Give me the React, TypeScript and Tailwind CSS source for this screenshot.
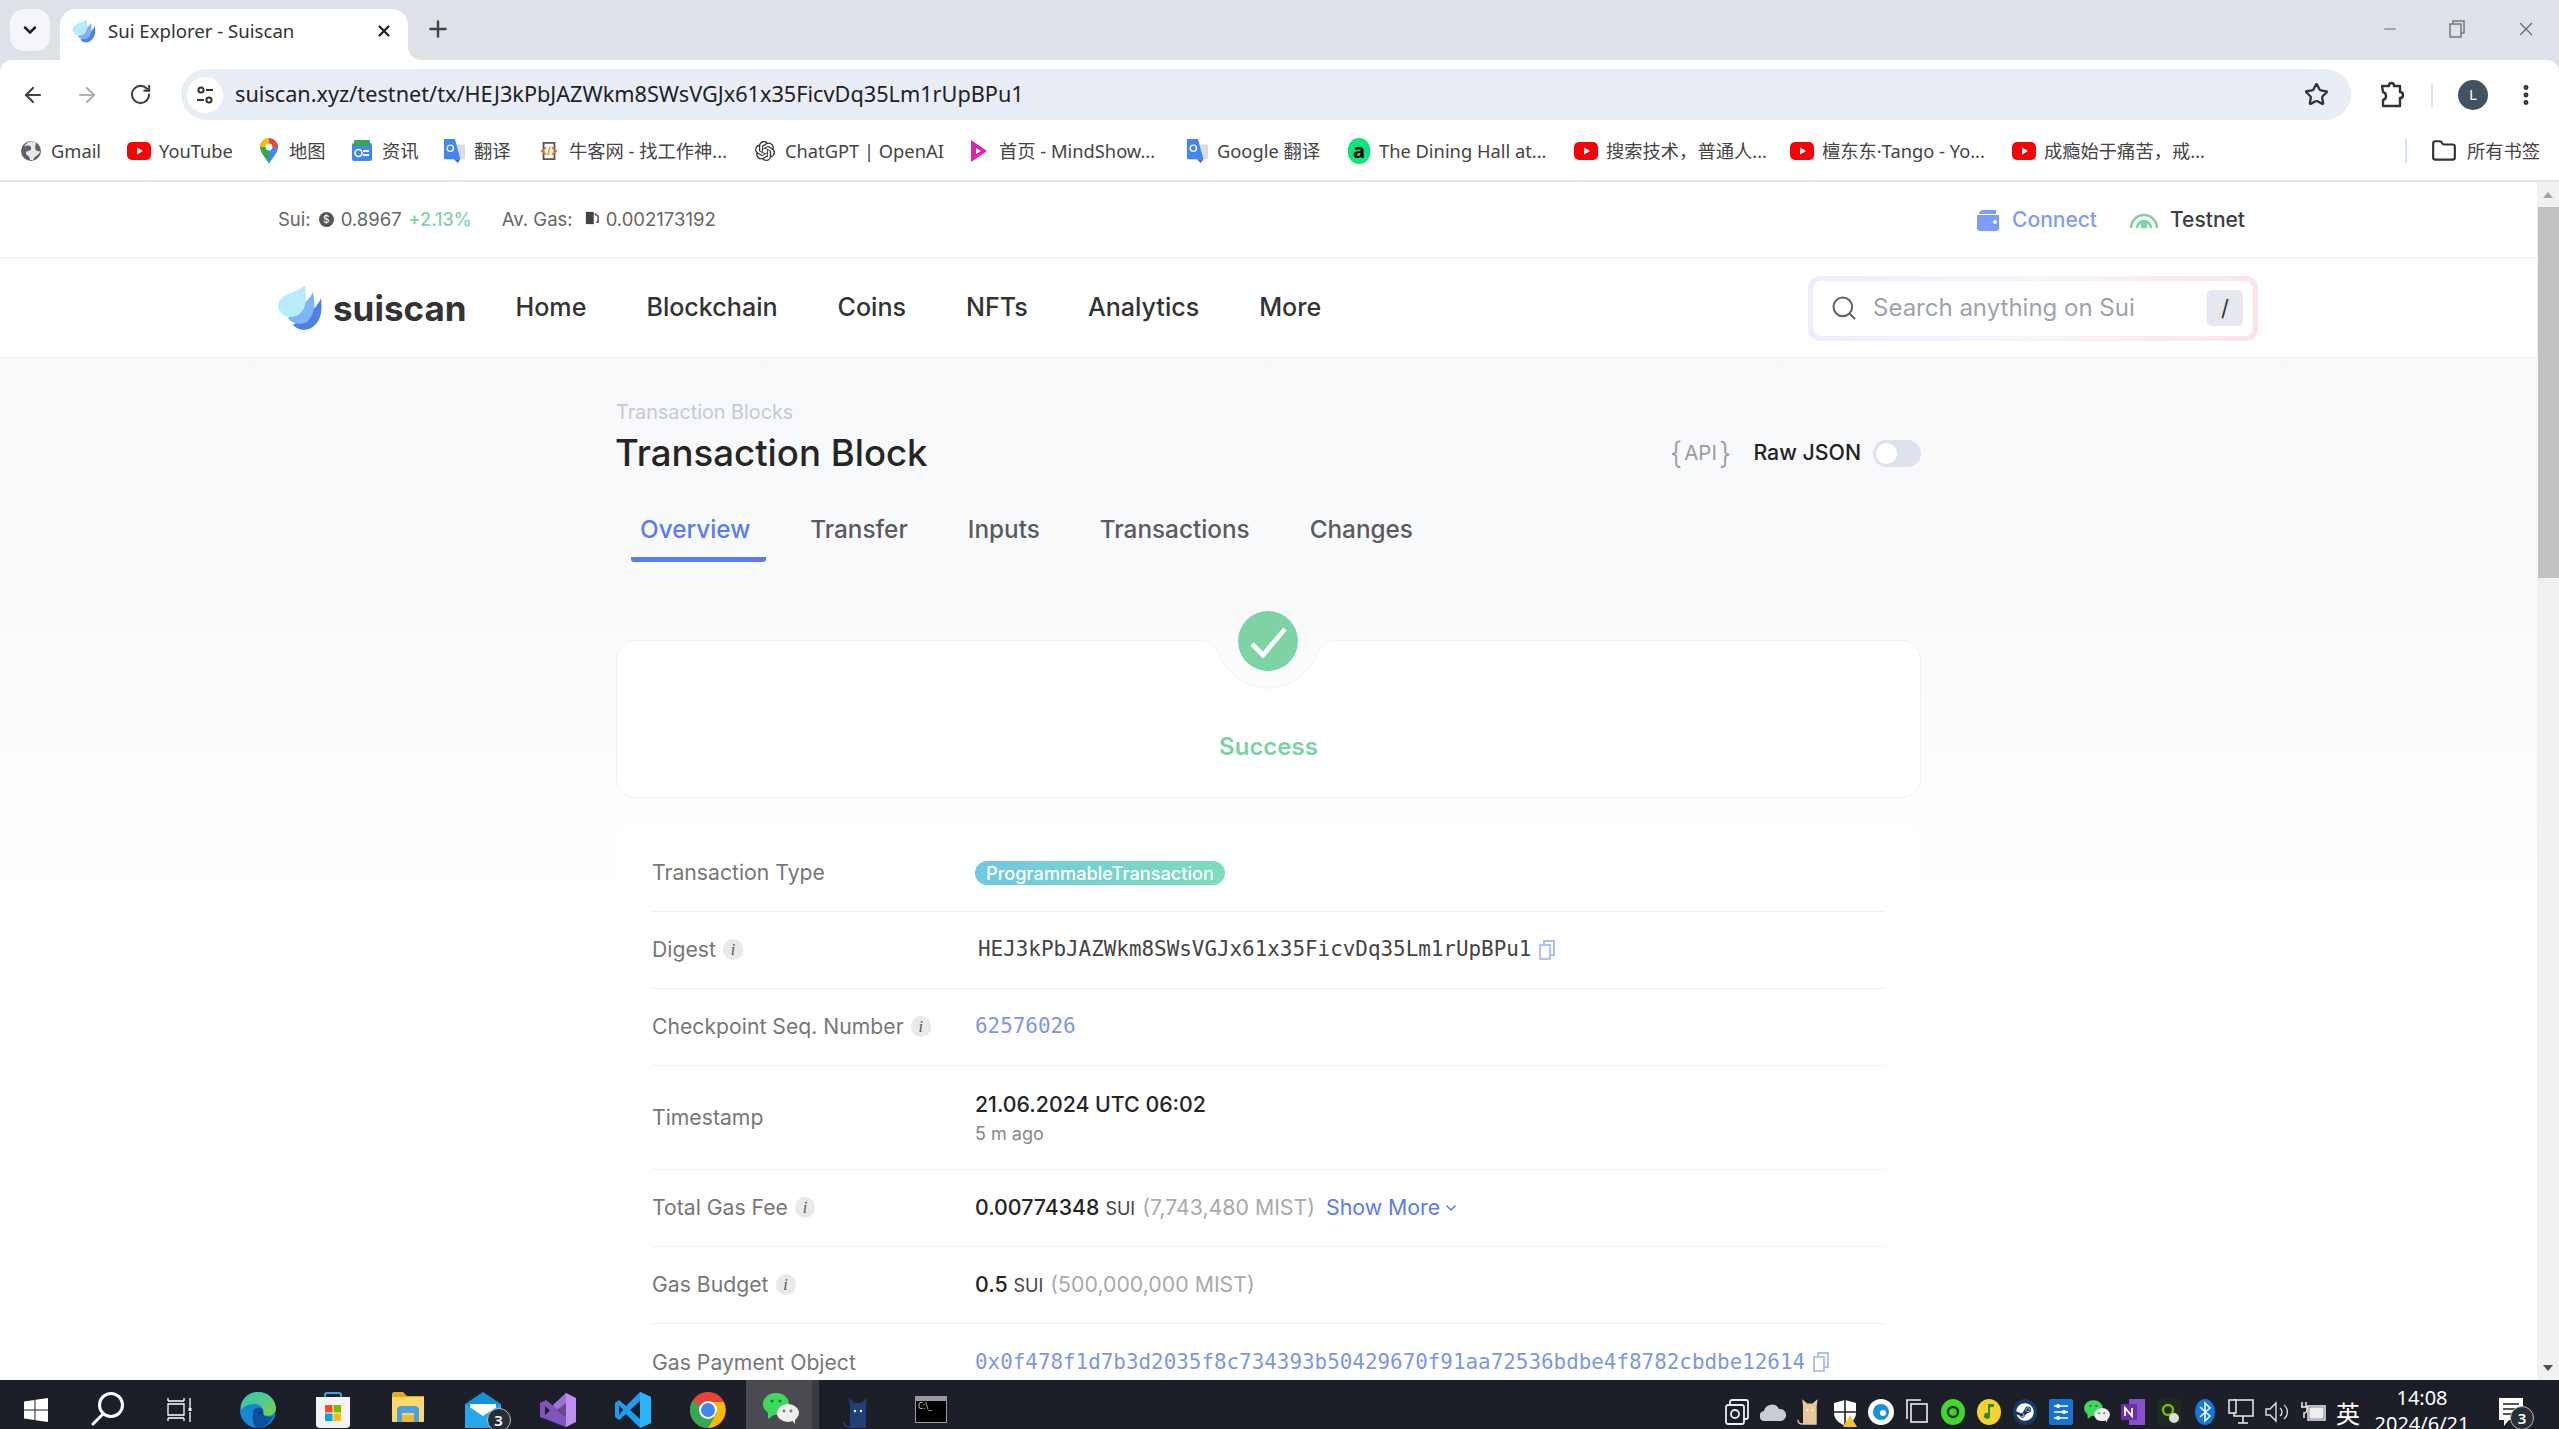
import { ArrowLeft, ArrowRight, ChevronDown, EllipsisVertical, Folder, Minus, Plus, RotateCw, Search, Star, X } from "lucide-react";
import { SiOpenai } from "react-icons/si";
import { FaSteam } from "react-icons/fa";
import type { ReactNode } from "react";

const SuiDrop = ({ className }: { className: string }) => (
  <svg viewBox="0 0 44 46" className={className}>
    <path d="M43 13C44 24 44 33 37 40C30 47 20 46 15 40C20 36 38 26 43 13Z" fill="#4f80e1" />
    <path d="M35 7C37 18 38 27 30 36C24 41 14 39 10 33C16 24 30 19 35 7Z" fill="#7eb4f8" />
    <path d="M27 0C28 8 29 18 25 25C20 33 9 34 3 28C-2 22 0 15 6 11C12 8 22 5 27 0Z" fill="#b7ecfb" />
  </svg>
);

const YoutubeIcon = () => (
  <svg viewBox="0 0 24 24" className="w-6 h-6">
    <rect x="0" y="3" width="24" height="18" rx="5" fill="#f40407" />
    <path d="M10 8.5L16 12L10 15.5Z" fill="#fff" />
  </svg>
);

const TranslateIcon = () => (
  <svg viewBox="0 0 24 26" className="w-[22px] h-6">
    <rect x="8" y="6" width="16" height="16" rx="1" fill="#dadce0" />
    <path d="M1 0H13L19 22H3A2 2 0 0 1 1 20Z" fill="#4285f4" />
    <path d="M12 22L16 26L19 22Z" fill="#3367d6" />
    <circle cx="8" cy="10" r="3.4" fill="none" stroke="#fff" strokeWidth="1.5" />
  </svg>
);

const bookmarks: { width: number; label: string; icon: ReactNode }[] = [
  {
    width: 108,
    label: "Gmail",
    icon: (
      <svg viewBox="0 0 22 22" className="w-[22px] h-[22px]">
        <circle cx="11" cy="11" r="10" fill="#5f6368" />
        <path d="M4 7C8 4 12 6 11 9C10 12 6 10 6 13C6 16 10 15 10 20L13 20C15 15 20 15 20 11C16 12 14 9 16 3C12 0 6 2 4 7Z" fill="#fff" opacity=".85" />
      </svg>
    ),
  },
  { width: 130, label: "YouTube", icon: <YoutubeIcon /> },
  {
    width: 93,
    label: "地图",
    icon: (
      <svg viewBox="0 0 18 26" className="w-[18px] h-[26px]">
        <path d="M9 26C6 20 0 15 0 9A9 9 0 0 1 9 0Z" fill="#34a853" />
        <path d="M9 26C12 20 18 15 18 9H9Z" fill="#4285f4" />
        <path d="M9 0A9 9 0 0 1 18 9H9Z" fill="#ea4335" />
        <path d="M0 9A9 9 0 0 1 9 0V9Z" fill="#fbbc04" />
        <circle cx="9" cy="9" r="3.4" fill="#fff" />
      </svg>
    ),
  },
  {
    width: 92,
    label: "资讯",
    icon: (
      <svg viewBox="0 0 22 22" className="w-[22px] h-[22px]">
        <rect x="1" y="3" width="20" height="18" rx="2" fill="#4285f4" />
        <rect x="3" y="0" width="16" height="6" rx="1" fill="#34a853" />
        <rect x="12" y="10" width="6" height="2" fill="#fff" />
        <rect x="12" y="14" width="6" height="2" fill="#fff" />
        <circle cx="7.5" cy="13" r="3.5" fill="none" stroke="#fff" strokeWidth="1.6" />
      </svg>
    ),
  },
  { width: 95, label: "翻译", icon: <TranslateIcon /> },
  {
    width: 216,
    label: "牛客网 - 找工作神...",
    icon: (
      <svg viewBox="0 0 22 22" className="w-5 h-5" fill="none" strokeWidth="2">
        <path d="M5 2H17V20H5Z" stroke="#555" />
        <path d="M8 7L3 11L8 15" stroke="#e8762b" />
        <path d="M14 7L19 11L14 15" stroke="#e8762b" />
        <path d="M12 6L10 16" stroke="#f2a33a" />
      </svg>
    ),
  },
  { width: 214, label: "ChatGPT | OpenAI", icon: <SiOpenai className="w-5 h-5 text-[#333]" /> },
  {
    width: 218,
    label: "首页 - MindShow...",
    icon: (
      <svg viewBox="0 0 18 24" className="w-[18px] h-6">
        <path d="M1 1L17 12L1 23Z" fill="#e31fb0" />
        <path d="M6 9L11 12L6 15Z" fill="#fff" />
      </svg>
    ),
  },
  { width: 162, label: "Google 翻译", icon: <TranslateIcon /> },
  {
    width: 227,
    label: "The Dining Hall at...",
    icon: (
      <span className="w-[22px] h-[26px] rounded-full bg-[#0fe37b] flex items-center justify-center text-[20px] font-bold leading-none text-black">a</span>
    ),
  },
  { width: 216, label: "搜索技术，普通人...", icon: <YoutubeIcon /> },
  { width: 222, label: "檀东东·Tango - Yo...", icon: <YoutubeIcon /> },
  { width: 216, label: "成瘾始于痛苦，戒...", icon: <YoutubeIcon /> },
];

const BrowserChrome = () => (
  <div className="bg-[#dee1e8] font-['Noto_Sans','Noto_Sans_CJK_SC',sans-serif] text-[#3c4043]">
    <div className="h-[60px] flex items-start pt-[9px]">
      <div className="ml-[10px] w-10 h-[42px] rounded-[14px] bg-[#f5f6f9] flex items-center justify-center">
        <ChevronDown className="w-5 h-5 text-[#222]" strokeWidth={3} />
      </div>
      <div className="relative ml-[10px] w-[348px] h-[51px] bg-white rounded-t-[16px] flex items-center pl-[12px] pr-[15px] pb-[8px]">
        <SuiDrop className="w-6 h-6" />
        <span className="ml-3 text-[18.6px] text-[#333] flex-1 whitespace-nowrap">Sui Explorer - Suiscan</span>
        <X className="w-[18px] h-[18px] text-[#222]" strokeWidth={3} />
        <svg viewBox="0 0 14 14" className="absolute -right-[14px] bottom-0 w-[14px] h-[14px]">
          <path d="M0 0C0 8 6 14 14 14H0Z" fill="#fff" />
        </svg>
      </div>
      <Plus className="ml-[17px] mt-[7px] w-[26px] h-[26px] text-[#444]" strokeWidth={2.2} />
      <div className="flex-1" />
      <div className="flex items-center h-10 text-[#666]">
        <Minus className="w-[18px] h-[18px] mr-[50px]" strokeWidth={1.5} />
        <svg viewBox="0 0 16 18" className="w-4 h-[18px] mr-[50px]" fill="none" stroke="#777" strokeWidth="1.5">
          <path d="M4 4V1H15V13H12" />
          <rect x="1" y="4" width="11" height="13" />
        </svg>
        <X className="w-[22px] h-[22px] mr-[22px]" strokeWidth={1.4} />
      </div>
    </div>
    <div className="h-[60px] pt-[9px] bg-white rounded-t-[12px] flex items-center">
      <ArrowLeft className="ml-[21px] w-6 h-6 text-[#444]" strokeWidth={2.2} />
      <ArrowRight className="ml-[30px] w-6 h-6 text-[#b0b2b5]" strokeWidth={2.2} />
      <RotateCw className="ml-[30px] w-[23px] h-[23px] text-[#444]" strokeWidth={2.2} />
      <div className="ml-[29px] w-[2170px] h-[51px] rounded-full bg-[#e9edf6] flex items-center pl-[6px] pr-[22px]">
        <span className="w-[36px] h-[36px] rounded-full bg-white flex items-center justify-center">
          <svg viewBox="0 0 20 20" className="w-5 h-5" fill="none" stroke="#333" strokeWidth="2">
            <circle cx="6" cy="5" r="2.6" />
            <path d="M11 5H18" />
            <circle cx="14" cy="15" r="2.6" />
            <path d="M2 15H9" />
          </svg>
        </span>
        <span className="ml-[12px] flex-1 text-[21.7px] text-[#202124]">suiscan.xyz/testnet/tx/HEJ3kPbJAZWkm8SWsVGJx61x35FicvDq35Lm1rUpBPu1</span>
        <Star className="w-[25px] h-[25px] text-[#333]" strokeWidth={2.2} />
      </div>
      <svg viewBox="0 0 24 28" className="ml-[29px] w-6 h-7" fill="none" stroke="#333" strokeWidth="2.4" strokeLinejoin="round">
        <path d="M2 5H9C9 1 14 1 14 5H20V11C24 11 24 17 20 17V25H3V19C7 18 7 12 3 11Z" />
      </svg>
      <div className="ml-[27px] w-[2px] h-[24px] bg-[#d3e3fd]" />
      <div className="ml-[25px] w-[30px] h-[30px] rounded-full bg-[#40535f] text-white text-[15px] flex items-center justify-center">L</div>
      <EllipsisVertical className="ml-[25px] w-[26px] h-[26px] text-[#333]" strokeWidth={2.6} />
    </div>
    <div className="h-[60px] pt-[2px] bg-white flex items-center pl-[19px] text-[18.3px] text-[#444]">
      {bookmarks.map((b) => (
        <div key={b.label} className="flex items-center shrink-0 whitespace-nowrap" style={{ width: b.width }}>
          <span className="w-[24px] flex justify-center">{b.icon}</span>
          <span className="ml-[8px]">{b.label}</span>
        </div>
      ))}
      <div className="flex-1" />
      <div className="w-[2px] h-[24px] bg-[#d3e3fd] mr-[24px]" />
      <Folder className="w-[26px] h-[26px] text-[#333]" strokeWidth={2} />
      <span className="ml-[10px] mr-[19px]">所有书签</span>
    </div>
    <div className="h-[2px] bg-[#e3e4e6]" />
  </div>
);

const Info = () => (
  <span className="ml-[7px] w-[20px] h-[21px] rounded-full bg-[#e9e9ea] inline-flex items-center justify-center font-['Liberation_Serif',serif] italic text-[16px] text-[#555] leading-none">i</span>
);

const Copy = () => (
  <svg viewBox="0 0 16 20" className="ml-[8px] w-4 h-5 shrink-0" fill="none" stroke="#aebcf5" strokeWidth="1.8">
    <rect x="1" y="5" width="10" height="14" />
    <path d="M5 5V1H15V15H11" />
  </svg>
);

const Row = ({ label, info, tall, last, children }: { label: string; info?: boolean; tall?: boolean; last?: boolean; children: ReactNode }) => (
  <div className={`flex items-center ${tall ? "h-[104px]" : "h-[77px]"} ${last ? "" : "border-b border-[#f1f2f3]"}`}>
    <div className="w-[323px] flex items-center text-[#777] text-[21.2px] shrink-0">
      {label}
      {info && <Info />}
    </div>
    <div className="flex items-center whitespace-nowrap">{children}</div>
  </div>
);

const monoFont = "font-['DejaVu_Sans_Mono',monospace] text-[20.9px]";

const Suiscan = () => (
  <div className="flex-1 min-w-0 bg-white font-['Inter',sans-serif] overflow-hidden">
    <div className="h-[77px] flex items-center pl-[278px] pr-[292px] border-b-2 border-[#f2f3f5] text-[18.5px] text-[#666]">
      <span>Sui:</span>
      <span className="ml-[8px] w-[15px] h-[15px] rounded-full bg-[#555] text-white text-[10px] flex items-center justify-center">$</span>
      <span className="ml-[7px]">0.8967</span>
      <span className="ml-[7px] text-[18px] text-[#7dd3a3] font-medium">+2.13%</span>
      <span className="ml-[30px]">Av. Gas:</span>
      <svg viewBox="0 0 16 16" className="ml-[12px] mb-[4px] w-[14px] h-[14px]">
        <path d="M1 1H10V15H1Z" fill="#444" />
        <path d="M11 3L15 6V13H13" fill="none" stroke="#444" strokeWidth="1.6" />
      </svg>
      <span className="ml-[7px]">0.002173192</span>
      <div className="flex-1" />
      <svg viewBox="0 0 22 22" className="w-[22px] h-[22px]">
        <path d="M2 5C2 2 4 1 6 1H19V5Z" fill="#7f9bfb" />
        <path d="M0 6H22V19C22 21 21 22 19 22H3C1 22 0 21 0 19Z" fill="#7f9bfb" />
        <circle cx="18" cy="13" r="2" fill="#fff" />
      </svg>
      <span className="ml-[13px] text-[21px] font-medium text-[#7f9bfb]">Connect</span>
      <svg viewBox="0 0 30 24" className="ml-[32px] mb-[3px] w-[30px] h-6" fill="none" stroke="#7dd3a3" strokeWidth="2.6">
        <path d="M2 22A13 13 0 0 1 28 22" />
        <path d="M8 22A7 7 0 0 1 22 22" />
        <circle cx="15" cy="19" r="3.5" fill="#7dd3a3" stroke="none" />
      </svg>
      <span className="ml-[11px] text-[21px] font-medium text-[#3d3d3d]">Testnet</span>
    </div>
    <div className="h-[98px] flex items-center pl-[278px] pr-[279px] text-[25.1px] font-medium text-[#333]">
      <SuiDrop className="w-[44px] h-[46px]" />
      <span className="ml-[11px] text-[35px] font-bold text-[#333] leading-none">suiscan</span>
      <div className="ml-[49px] flex gap-[60px]">
        <span>Home</span>
        <span>Blockchain</span>
        <span>Coins</span>
        <span>NFTs</span>
        <span>Analytics</span>
        <span>More</span>
      </div>
      <div className="flex-1" />
      <div className="w-[450px] h-[65px] rounded-[12px] p-[5px] bg-[linear-gradient(100deg,#eceefb,#f7f4fb_50%,#fbe4e8)]">
        <div className="h-full bg-white rounded-[8px] flex items-center pl-[17px] pr-[10px]">
          <Search className="w-[28px] h-[28px] text-[#666]" strokeWidth={1.8} />
          <span className="ml-[15px] flex-1 text-[24px] text-[#9ca3af] font-normal">Search anything on Sui</span>
          <span className="w-9 h-9 rounded-[5px] bg-[#e5e8ef] flex items-center justify-center text-[22px] text-[#333] font-normal">/</span>
        </div>
      </div>
    </div>
    <div className="h-[1023px] overflow-hidden border-t border-[#f2f3f5] bg-[linear-gradient(180deg,#f7f8fa_0,#f9fafc_260px,#ffffff_560px)] pl-[616px]">
      <div className="w-[1305px] text-[21.3px]">
        <div className="pt-[42px] text-[19.8px] leading-6 text-[#c6c9d1]">Transaction Blocks</div>
        <div className="mt-[7px] h-11 flex items-center">
          <h1 className="-ml-[1px] text-[36.6px] font-medium text-[#252525] flex-1">Transaction Block</h1>
          <span className="text-[#9a9ca3] text-[20.5px] flex items-center font-normal">
            <span className="text-[30px] font-light leading-none">{"{"}</span>
            <span className="mx-[2px]">API</span>
            <span className="text-[30px] font-light leading-none">{"}"}</span>
          </span>
          <span className="ml-[22px] font-medium text-[#222]">Raw JSON</span>
          <div className="ml-[12px] w-[48px] h-[27px] rounded-full bg-[#dfe1ec] p-[3px]">
            <div className="w-[21px] h-[21px] rounded-full bg-white" />
          </div>
        </div>
        <div className="mt-[25px] ml-[15px] flex gap-[35px] text-[24.3px] font-medium text-[#5b5b5f]">
          <span className="pl-[9px] pr-[16px] pt-[14px] pb-[13px] leading-[30px] border-b-[5px] border-[#5b7cf0] rounded-b-[3px] text-[#5b7cf0]">Overview</span>
          <span className="pl-[9px] pr-[16px] pt-[14px] pb-[18px] leading-[30px]">Transfer</span>
          <span className="pl-[9px] pr-[16px] pt-[14px] pb-[18px] leading-[30px]">Inputs</span>
          <span className="pl-[9px] pr-[16px] pt-[14px] pb-[18px] leading-[30px]">Transactions</span>
          <span className="pl-[9px] pr-[16px] pt-[14px] pb-[18px] leading-[30px]">Changes</span>
        </div>
        <div className="relative mt-[78px] h-[158px] rounded-[20px] bg-white border border-[#f1f2f4] flex items-end justify-center pb-[32px]">
          <span className="text-[24px] font-semibold text-[#7dd3a3]">Success</span>
          <svg viewBox="0 0 140 50" className="absolute left-[581px] -top-[1px] w-[140px] h-[50px]">
            <path d="M0 1C14 1 18 6 22 16C29 34 50 48 70 48C90 48 111 34 118 16C122 6 126 1 140 1V0H0Z" fill="#fbfcfd" stroke="none" />
            <path d="M0 1C14 1 18 6 22 16C29 34 50 48 70 48C90 48 111 34 118 16C122 6 126 1 140 1" fill="none" stroke="#f1f2f4" />
          </svg>
          <div className="absolute left-[621px] -top-[30px] w-[60px] h-[60px] rounded-full bg-[#7dd3a3]">
            <svg viewBox="0 0 60 60" className="w-[60px] h-[60px]" fill="none" stroke="#fff" strokeWidth="4.6">
              <path d="M14 33L25 44L47 18" />
            </svg>
          </div>
        </div>
        <div className="mt-[23px] rounded-[20px] bg-white px-[36px] pt-[14px]">
          <Row label="Transaction Type">
            <span className="px-[11px] h-[24px] rounded-full bg-[linear-gradient(90deg,#72c8e2,#7edcb9)] text-white text-[18.2px] leading-[24px] font-medium">ProgrammableTransaction</span>
          </Row>
          <Row label="Digest" info>
            <span className={`${monoFont} ml-[3px] text-[#444]`}>HEJ3kPbJAZWkm8SWsVGJx61x35FicvDq35Lm1rUpBPu1</span>
            <Copy />
          </Row>
          <Row label="Checkpoint Seq. Number" info>
            <span className={`${monoFont} text-[#7c97e8]`}>62576026</span>
          </Row>
          <Row label="Timestamp" tall>
            <div className="flex flex-col">
              <span className="font-medium text-[#252525] leading-[28px]">21.06.2024 UTC 06:02</span>
              <span className="mt-[4px] text-[18px] text-[#888] leading-[24px]">5 m ago</span>
            </div>
          </Row>
          <Row label="Total Gas Fee" info>
            <span className="font-medium text-[#252525]">0.00774348</span>
            <span className="ml-[6px] text-[18px] text-[#444]">SUI</span>
            <span className="ml-[7px] text-[#aaa]">(7,743,480 MIST)</span>
            <span className="ml-[11px] text-[#5b7cf0]">Show More</span>
            <ChevronDown className="ml-[3px] w-4 h-4 text-[#5b7cf0]" strokeWidth={2.4} />
          </Row>
          <Row label="Gas Budget" info>
            <span className="font-medium text-[#252525]">0.5</span>
            <span className="ml-[6px] text-[18px] text-[#444]">SUI</span>
            <span className="ml-[7px] text-[#aaa]">(500,000,000 MIST)</span>
          </Row>
          <Row label="Gas Payment Object" last>
            <span className={`${monoFont} text-[#7c97e8]`}>0x0f478f1d7b3d2035f8c734393b50429670f91aa72536bdbe4f8782cbdbe12614</span>
            <Copy />
          </Row>
        </div>
      </div>
    </div>
  </div>
);

const Scrollbar = () => (
  <div className="w-[22px] bg-[#f1f1f1] flex flex-col">
    <div className="h-[25px] flex items-center justify-center">
      <span className="w-0 h-0 border-x-[5px] border-x-transparent border-b-[6px] border-b-[#a3a3a3]" />
    </div>
    <div className="h-[371px] ml-[1px] bg-[#c1c1c1]" />
    <div className="flex-1" />
    <div className="h-[25px] flex items-center justify-center">
      <span className="w-0 h-0 border-x-[5px] border-x-transparent border-t-[6px] border-t-[#505050]" />
    </div>
  </div>
);

const taskApps: ReactNode[] = [
  // edge
  <svg viewBox="0 0 36 36" className="w-9 h-9" key="edge">
    <defs>
      <linearGradient id="edgeA" x1="0" y1="0" x2="1" y2="1">
        <stop offset="0" stopColor="#2fc5c0" />
        <stop offset="1" stopColor="#7ad14b" />
      </linearGradient>
    </defs>
    <circle cx="18" cy="18" r="18" fill="#1587d4" />
    <path d="M1 13C4 4 11 0 18 0C29 0 36 8 36 17C36 21 33 24 28 24C25 24 23 23 23 22C25 18 21 11 14 12C8 12 3 15 1 18Z" fill="url(#edgeA)" />
    <path d="M13 20C14 15 20 14 23 18C24 21 22 23 25 24C28 25 31 25 33 24C30 31 24 36 18 36C14 36 12 30 13 20Z" fill="#0d4f9b" />
    <path d="M18 21C20 19 22 20 23 22C24 24 28 25 33 23L36 21V17C36 21 33 24 28 24C25 24 23 23 23 22Z" fill="#1c1e28" />
  </svg>,
  // store
  <svg viewBox="0 0 36 36" className="w-9 h-9" key="store">
    <path d="M10 6V3C10 1 11 1 12 1H24C25 1 26 1 26 3V6" fill="none" stroke="#38a5da" strokeWidth="2" />
    <path d="M1 5H35V33C35 35 33 36 31 36H5C3 36 1 35 1 33Z" fill="#f4f4f4" />
    <rect x="10" y="13" width="7.5" height="7.5" fill="#f25022" />
    <rect x="18.5" y="13" width="7.5" height="7.5" fill="#7fba00" />
    <rect x="10" y="21.5" width="7.5" height="7.5" fill="#00a4ef" />
    <rect x="18.5" y="21.5" width="7.5" height="7.5" fill="#ffb900" />
  </svg>,
  // explorer
  <svg viewBox="0 0 32 32" className="w-8 h-8" key="files">
    <path d="M0 2C0 1 1 0 2 0H11L15 4H32V28C32 29 31 30 30 30H2C1 30 0 29 0 28Z" fill="#e2a923" />
    <rect x="0" y="5" width="32" height="25" rx="1" fill="#fbd76d" />
    <path d="M5 30V18C5 15 7 14 9 14H23C25 14 27 15 27 18V30H22V21H10V30Z" fill="#4aa3e0" />
    <rect x="10" y="23" width="12" height="7" fill="#f2b632" />
  </svg>,
  // mail
  <div className="relative w-9 h-9" key="mail">
    <svg viewBox="0 0 36 36" className="w-9 h-9">
      <path d="M0 12L18 0L36 12V36H0Z" fill="#1490df" />
      <path d="M5 12H31V24L18 30L5 24Z" fill="#fff" />
      <path d="M0 12L18 24L36 12V36H0Z" fill="#28a8ea" />
    </svg>
    <span className="absolute -right-[10px] top-[16px] w-[24px] h-[24px] rounded-full bg-[#2a2d37] border border-[#bbb] text-white text-[15px] font-semibold flex items-center justify-center leading-none">3</span>
  </div>,
  // visual studio
  <svg viewBox="0 0 36 36" className="w-9 h-9" key="vs">
    <path d="M26 1L36 6V30L26 35L9 19Z" fill="#c08df0" />
    <path d="M26 1L26 35L9 19L14 12Z" fill="#a06fdb" />
    <path d="M0 11L6 8L26 24V35L0 25Z" fill="#7d55bd" />
    <path d="M5 14V23L10 18.5Z" fill="#1c1e28" />
    <path d="M26 11L17 18L26 25Z" fill="#1c1e28" opacity=".45" />
  </svg>,
  // vscode
  <svg viewBox="0 0 36 36" className="w-9 h-9" key="vscode">
    <path d="M25 0L36 5V31L25 36L11 22L4 28L0 25V11L4 8L11 14Z" fill="#1f9cf0" />
    <path d="M4 13L8 18L4 23Z" fill="#1c1e28" />
    <path d="M25 0L36 5V31L25 36Z" fill="#29b6f6" />
    <path d="M25 9L25 27L15 18Z" fill="#1c1e28" />
  </svg>,
  // chrome
  <svg viewBox="0 0 36 36" className="w-9 h-9" key="chrome">
    <circle cx="18" cy="18" r="18" fill="#ea4335" />
    <path d="M18 18L2.4 9A18 18 0 0 0 18 36L27 21Z" fill="#34a853" />
    <path d="M18 10H33.6A18 18 0 0 1 18 36L27 21Z" fill="#fbbc04" />
    <circle cx="18" cy="18" r="9" fill="#fff" />
    <circle cx="18" cy="18" r="7" fill="#4285f4" />
  </svg>,
];

const WeChat = ({ className }: { className: string }) => (
  <svg viewBox="0 0 36 32" className={className}>
    <ellipse cx="13" cy="12" rx="13" ry="11" fill="#3fd85f" />
    <path d="M5 20L5 27L12 22Z" fill="#3fd85f" />
    <circle cx="9" cy="9" r="1.6" fill="#1f7a35" />
    <circle cx="17" cy="9" r="1.6" fill="#1f7a35" />
    <ellipse cx="25" cy="21" rx="11" ry="9" fill="#eee" />
    <path d="M29 28L32 32L32 26Z" fill="#eee" />
    <circle cx="21" cy="19" r="1.4" fill="#777" />
    <circle cx="28" cy="19" r="1.4" fill="#777" />
  </svg>
);

const CatIcon = ({ className, fill }: { className: string; fill: string }) => (
  <svg viewBox="0 0 28 30" className={className}>
    <path d="M7 30V8L6 0L12 5H18L24 0L23 8V30Z" fill={fill} />
    <path d="M7 29C3 29 1 27 1 24" fill="none" stroke={fill} strokeWidth="1.6" />
    <circle cx="12" cy="13" r="1.2" fill="#fff" />
    <circle cx="18" cy="13" r="1.2" fill="#fff" />
  </svg>
);

const tray: ReactNode[] = [
  <svg viewBox="0 0 24 26" className="w-6 h-[26px]" fill="none" stroke="#eee" strokeWidth="1.8" key="a">
    <rect x="5" y="1" width="18" height="19" rx="2" />
    <rect x="1" y="6" width="18" height="19" rx="2" fill="#1c1e28" />
    <circle cx="10" cy="15" r="4" />
  </svg>,
  <svg viewBox="0 0 26 18" className="w-[26px] h-[18px] mt-[4px]" key="b">
    <path d="M5 18A5 5 0 0 1 4 8A8 8 0 0 1 19 6A6 6 0 0 1 21 18Z" fill="#c9ccd2" />
  </svg>,
  <CatIcon className="w-6 h-[26px]" fill="#e7c79e" key="c" />,
  <svg viewBox="0 0 24 28" className="w-6 h-7" key="d">
    <path d="M12 1L23 4V14C23 20 18 24 12 27C6 24 1 20 1 14V4Z" fill="#fff" />
    <path d="M12 1V27M1 13H23" stroke="#222" strokeWidth="1.6" />
    <path d="M17 16L24 28H10Z" fill="#f7c52b" />
  </svg>,
  <svg viewBox="0 0 26 26" className="w-[26px] h-[26px]" key="e">
    <circle cx="13" cy="13" r="13" fill="#fff" />
    <circle cx="13" cy="13" r="8" fill="#1b8fd8" />
    <circle cx="15" cy="14" r="3" fill="#fff" />
  </svg>,
  <svg viewBox="0 0 22 24" className="w-[22px] h-6" fill="none" stroke="#eee" strokeWidth="1.6" key="f">
    <path d="M1 20V1H15" />
    <rect x="5" y="5" width="16" height="18" />
  </svg>,
  <svg viewBox="0 0 24 26" className="w-6 h-[26px]" key="g">
    <ellipse cx="12" cy="13" rx="12" ry="13" fill="#44d62c" />
    <circle cx="12" cy="13" r="5" fill="none" stroke="#0c3a08" strokeWidth="2.4" />
  </svg>,
  <svg viewBox="0 0 24 26" className="w-6 h-[26px]" key="h">
    <ellipse cx="12" cy="13" rx="12" ry="13" fill="#f6d22f" />
    <path d="M13 5V17A3 3 0 1 1 11 14V5H17V8H13" fill="#2a8a3a" />
  </svg>,
  <div className="w-6 h-[26px] rounded-full bg-[#143a66] flex items-center justify-center" key="i">
    <FaSteam className="w-[18px] h-[18px] text-white" />
  </div>,
  <svg viewBox="0 0 24 26" className="w-6 h-[26px]" key="j">
    <rect width="24" height="26" rx="2" fill="#1673d1" />
    <path d="M5 7H19M5 13H19M5 19H19" stroke="#fff" strokeWidth="1.6" />
    <circle cx="9" cy="7" r="2" fill="#fff" />
    <circle cx="15" cy="13" r="2" fill="#fff" />
    <circle cx="9" cy="19" r="2" fill="#fff" />
  </svg>,
  <WeChat className="w-[26px] h-[24px]" key="k" />,
  <svg viewBox="0 0 24 26" className="w-6 h-[26px]" key="l">
    <rect x="8" width="16" height="26" fill="#8b4fc9" />
    <rect y="5" width="16" height="16" rx="1" fill="#6b2ea8" />
    <path d="M4 17V9L11 17V9" stroke="#fff" strokeWidth="1.8" fill="none" />
  </svg>,
  <svg viewBox="0 0 24 26" className="w-6 h-[26px]" key="m">
    <rect width="24" height="26" rx="2" fill="#1e2a1c" />
    <circle cx="11" cy="11" r="5" fill="none" stroke="#76b900" strokeWidth="2.4" />
    <circle cx="17" cy="19" r="5" fill="#ddd" />
  </svg>,
  <svg viewBox="0 0 20 26" className="w-5 h-[26px]" key="n">
    <ellipse cx="10" cy="13" rx="10" ry="13" fill="#1377e0" />
    <path d="M5 8L15 17L10 22V4L15 9L5 18" stroke="#fff" strokeWidth="1.5" fill="none" />
  </svg>,
  <svg viewBox="0 0 26 26" className="w-[26px] h-[26px]" fill="none" stroke="#eee" strokeWidth="1.5" key="o">
    <rect x="6" y="1" width="19" height="16" />
    <rect x="1" y="1" width="7" height="13" fill="#1c1e28" />
    <path d="M15 17V24M10 24H20" />
  </svg>,
  <svg viewBox="0 0 26 26" className="w-[26px] h-[26px]" fill="none" stroke="#ddd" strokeWidth="1.4" key="p">
    <path d="M2 10H6L12 4V22L6 16H2Z" />
    <path d="M16 9A5 5 0 0 1 16 17M20 6A9 9 0 0 1 20 20" />
  </svg>,
  <svg viewBox="0 0 26 22" className="w-[26px] h-[22px] mt-[2px]" fill="none" stroke="#eee" strokeWidth="1.5" key="q">
    <rect x="8" y="5" width="17" height="14" />
    <rect x="10" y="7" width="13" height="10" fill="#eee" />
    <path d="M2 1V6M6 1V6M1 6H7V9C7 11 5 12 4 12V17" />
  </svg>,
];

const Taskbar = () => (
  <div className="h-[49px] bg-[#1c1e28] flex items-start overflow-hidden text-white font-['Noto_Sans','Noto_Sans_CJK_SC',sans-serif]">
    <div className="w-[72px] pt-[18px] flex justify-center">
      <svg viewBox="0 0 24 24" className="w-6 h-6" fill="#fff">
        <path d="M0 3.5L10.5 2V11.5H0ZM11.5 1.8L24 0V11.5H11.5ZM0 12.5H10.5V22L0 20.5ZM11.5 12.5H24V24L11.5 22.2Z" />
      </svg>
    </div>
    <div className="w-[72px] pt-[12px] flex justify-center">
      <svg viewBox="0 0 34 34" className="w-[34px] h-[34px]" fill="none" stroke="#fff" strokeWidth="3">
        <circle cx="20" cy="13" r="11.5" />
        <path d="M12 22L2 32" strokeLinecap="round" />
      </svg>
    </div>
    <div className="w-[72px] pt-[18px] flex justify-center">
      <svg viewBox="0 0 26 24" className="w-[26px] h-6" fill="none" stroke="#fff" strokeWidth="1.3">
        <path d="M1 3H17M1 6H17V17H1ZM1 20H17M1 23V20M17 23V20M1 3V0M17 3V0" />
        <path d="M23 0V10M23 14V24" />
        <rect x="21.5" y="10" width="3" height="3" fill="#fff" stroke="none" />
      </svg>
    </div>
    <div className="ml-[4px] flex items-start">
      {taskApps.map((icon, i) => (
        <div key={i} className="w-[75px] pt-[12px] flex justify-center">
          {icon}
        </div>
      ))}
      <div className="w-[66px] h-[49px] ml-[1px] pl-[4px] bg-[#4a4b50] pt-[12px] flex justify-center">
        <WeChat className="w-[36px] h-[32px]" />
      </div>
      <div className="w-[7px] h-[49px] bg-[#3a3b40]" />
      <div className="w-[76px] pt-[18px] flex justify-center">
        <CatIcon className="w-7 h-[30px]" fill="#1f3f78" />
      </div>
      <div className="w-[72px] pt-[16px] flex justify-center">
        <div className="w-[32px] h-[27px] bg-[#000] border border-[#999] border-t-[5px] text-[8px] leading-none text-[#ddd] pl-[2px] pt-[1px]">C:\_</div>
      </div>
    </div>
    <div className="flex-1" />
    <div className="flex pt-[19px]">
      {tray.map((icon, i) => (
        <div key={i} className="w-9 flex justify-center shrink-0">
          {icon}
        </div>
      ))}
      <span className="w-[34px] text-[24px] leading-7 text-center font-['Noto_Sans_CJK_SC',sans-serif]">英</span>
    </div>
    <div className="ml-[2px] w-[110px] text-center text-[20px] leading-[26px] -mt-[2px]">
      <div className="pt-[7px]">14:08</div>
      <div>2024/6/21</div>
    </div>
    <div className="relative ml-[22px] mr-[36px] mt-[18px] w-[24px] h-[28px]">
      <svg viewBox="0 0 24 28" className="w-6 h-7">
        <path d="M0 0H24V22H10L5 28V22H0Z" fill="#fff" />
        <path d="M4 6H20M4 11H20M4 16H14" stroke="#1c1e28" strokeWidth="1.6" />
      </svg>
      <span className="absolute left-[11px] top-[8px] w-[24px] h-[24px] rounded-full bg-[#2a2d37] border border-[#bbb] text-[15px] font-semibold flex items-center justify-center leading-none">3</span>
    </div>
  </div>
);

export default function App() {
  return (
    <div className="w-[2559px] h-[1429px] flex flex-col overflow-hidden bg-white">
      <BrowserChrome />
      <div className="h-[1198px] flex overflow-hidden">
        <Suiscan />
        <Scrollbar />
      </div>
      <Taskbar />
    </div>
  );
}
